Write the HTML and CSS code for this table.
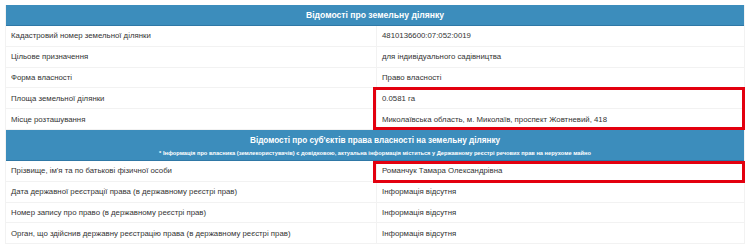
FILE: index.html
```html
<!DOCTYPE html>
<html lang="uk">
<head>
<meta charset="utf-8">
<title>Відомості про земельну ділянку</title>
<link rel="stylesheet" href="styles.css">
</head>
<body>
<div class="sheet">
  <div class="head">Відомості про земельну ділянку</div>
  <div class="row"><div class="label">Кадастровий номер земельної ділянки</div><div class="value">4810136600:07:052:0019</div></div>
  <div class="row"><div class="label">Цільове призначення</div><div class="value">для індивідуального садівництва</div></div>
  <div class="row"><div class="label">Форма власності</div><div class="value">Право власності</div></div>
  <div class="mark mark-a">
    <div class="row"><div class="label">Площа земельної ділянки</div><div class="value">0.0581 га</div></div>
    <div class="row"><div class="label">Місце розташування</div><div class="value">Миколаївська область, м. Миколаїв, проспект Жовтневий, 418</div></div>
  </div>
  <div class="head head-two">
    <div class="head-title">Відомості про суб'єктів права власності на земельну ділянку</div>
    <div class="head-note">* Інформація про власника (землекористувачів) є довідковою, актуальна інформація міститься у Державному реєстрі речових прав на нерухоме майно</div>
  </div>
  <div class="mark mark-b">
    <div class="row"><div class="label">Прізвище, ім'я та по батькові фізичної особи</div><div class="value">Романчук Тамара Олександрівна</div></div>
  </div>
  <div class="row"><div class="label">Дата державної реєстрації права (в державному реєстрі прав)</div><div class="value">Інформація відсутня</div></div>
  <div class="row"><div class="label">Номер запису про право (в державному реєстрі прав)</div><div class="value">Інформація відсутня</div></div>
  <div class="row"><div class="label">Орган, що здійснив державну реєстрацію права (в державному реєстрі прав)</div><div class="value">Інформація відсутня</div></div>
</div>
</body>
</html>
```

FILE: styles.css
```css
* { box-sizing: border-box; }
html, body { margin: 0; padding: 0; background: #fff; }
body {
  font-family: "Liberation Sans", Arial, sans-serif;
  font-size: 7.8px;
  color: #333;
}
.sheet {
  margin: 5px 0 0 5px;
  width: 740px;
  border-left: 1px solid #f2f2f2;
  border-right: 1px solid #f2f2f2;
}
.head {
  height: 21px;
  background: #3c8dbc;
  border-bottom: 1px solid #2f78a6;
  color: #fff;
  font-weight: bold;
  font-size: 8.6px;
  display: flex;
  align-items: center;
  justify-content: center;
}
.head-two {
  height: 31px;
  flex-direction: column;
  justify-content: flex-start;
  padding-top: 5px;
}
.head-title { font-size: 8.2px; line-height: 11px; }
.head-note { font-size: 5.7px; line-height: 8px; margin-top: 3.5px; }
.row {
  display: flex;
  height: 20.8px;
  border-bottom: 1px solid #f2f2f2;
  align-items: center;
}
.label {
  width: 370px;
  padding-left: 5px;
  height: 100%;
  display: flex;
  align-items: center;
}
.value {
  flex: 1;
  height: 100%;
  padding-left: 5px;
  border-left: 1px solid #f2f2f2;
  display: flex;
  align-items: center;
}
.mark { position: relative; }
.mark::after {
  content: "";
  position: absolute;
  left: 367px;
  right: -1px;
  border: 3px solid #e3000f;
  pointer-events: none;
}
.mark-a::after { top: -1.5px; bottom: 0; }
.mark-b::after { top: 0; bottom: -1px; }
```
